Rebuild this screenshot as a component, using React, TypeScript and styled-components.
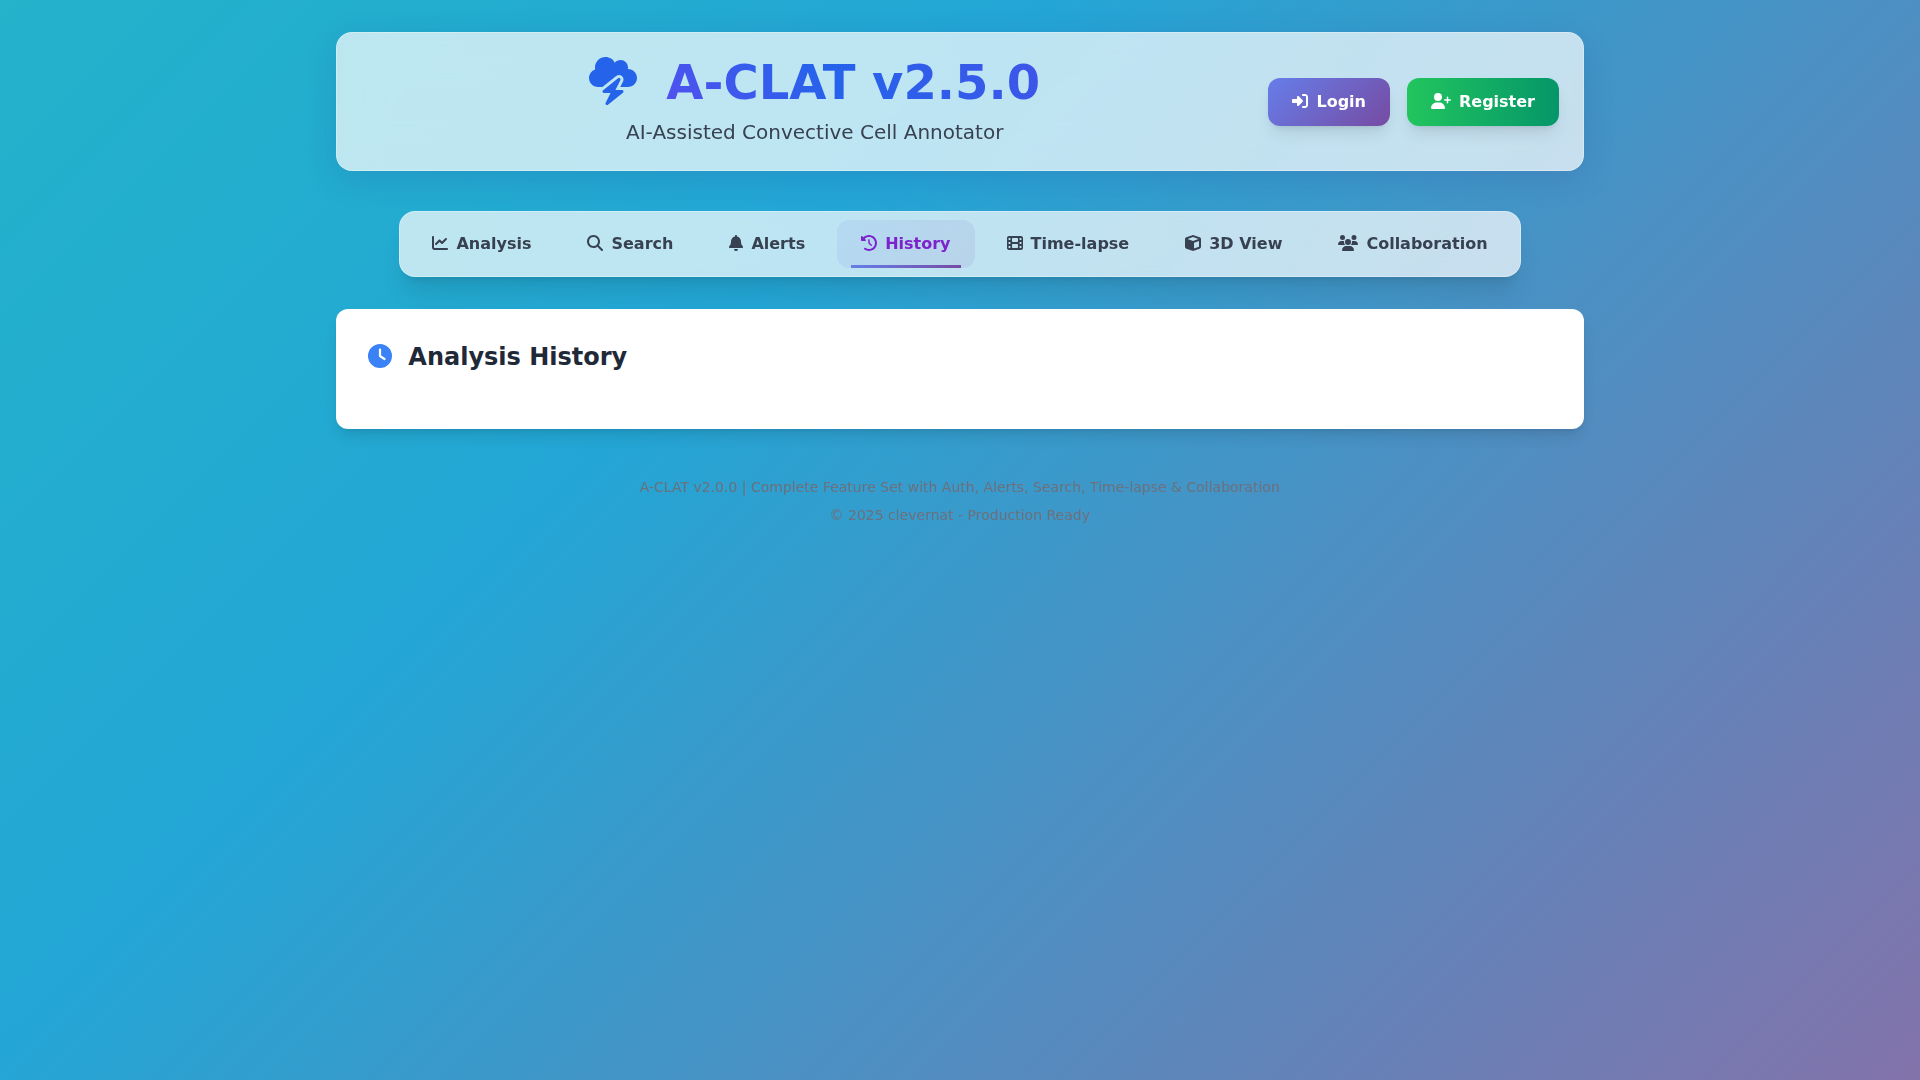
import React from 'react';
import styled, { createGlobalStyle, css } from 'styled-components';
import {
  FaBell,
  FaChartLine,
  FaClock,
  FaClockRotateLeft,
  FaCloudBolt,
  FaCube,
  FaFilm,
  FaMagnifyingGlass,
  FaRightToBracket,
  FaUserPlus,
  FaUsers,
} from 'react-icons/fa6';

const GlobalStyle = createGlobalStyle`
  *, *::before, *::after { box-sizing: border-box; }
  body {
    margin: 0;
    min-height: 100vh;
    font-family: 'DejaVu Sans', sans-serif;
    font-size: 16px;
    line-height: 24px;
    background: linear-gradient(-45deg, #ee7752, #e73c7e, #23a6d5, #23d5ab);
    background-size: 7680px 4320px;
    background-position: -1330px -1620px;
    background-attachment: fixed;
  }
  h1, h2, p { margin: 0; }
  svg { flex: none; margin-bottom: 2px; }
  svg[viewBox='0 0 640 512'] { width: 1.25em; }
  svg[viewBox='0 0 448 512'] { width: 0.875em; }
`;

const glass = css`
  background: rgba(255, 255, 255, 0.7);
  backdrop-filter: blur(20px);
  border: 1px solid rgba(255, 255, 255, 0.3);
  border-radius: 16px;
`;

const Page = styled.div`
  max-width: 1280px;
  margin: 0 auto;
  padding: 32px 16px;
`;

const Header = styled.header`
  ${glass}
  display: flex;
  align-items: center;
  height: 139px;
  margin-bottom: 40px;
  padding: 24px;
  box-shadow: 0 8px 32px rgba(31, 38, 135, 0.15);
`;

const Brand = styled.div`
  flex: 1;
  text-align: center;
`;

const Title = styled.h1`
  display: flex;
  justify-content: center;
  align-items: center;
  height: 49px;
  margin-bottom: 12px;
  font-size: 48px;
  line-height: 48px;
  font-weight: 700;
  svg { color: #2563eb; margin-right: 29px; }
`;

const TitleText = styled.span`
  background: linear-gradient(45deg, #5350ee, #2563eb 45%, #3f54e8);
  background-clip: text;
  -webkit-background-clip: text;
  color: transparent;
`;

const Tagline = styled.p`
  font-size: 20px;
  line-height: 28px;
  color: #374151;
`;

const Actions = styled.div`
  display: flex;
  gap: 17px;
`;

const ActionButton = styled.button<{ $fill: string }>`
  display: flex;
  align-items: center;
  gap: 8px;
  height: 48px;
  padding: 0 24px;
  border: 0;
  border-radius: 12px;
  background: ${({ $fill }) => $fill};
  color: #fff;
  font: 600 16px/24px 'DejaVu Sans', sans-serif;
  box-shadow: 0 10px 15px -3px rgba(0, 0, 0, 0.1), 0 4px 6px -4px rgba(0, 0, 0, 0.1);
`;

const Nav = styled.nav`
  ${glass}
  display: flex;
  gap: 8px;
  width: fit-content;
  margin: 0 auto 32px;
  padding: 8px;
  box-shadow: 0 20px 25px -5px rgba(0, 0, 0, 0.1), 0 8px 10px -6px rgba(0, 0, 0, 0.1);
`;

const Tab = styled.button<{ $active: boolean }>`
  position: relative;
  display: flex;
  align-items: center;
  gap: 8px;
  height: 48px;
  padding: 0 24px;
  border: 0;
  border-radius: 12px;
  background: ${({ $active }) =>
    $active ? 'linear-gradient(135deg, rgba(102, 126, 234, 0.1), rgba(118, 75, 162, 0.1))' : 'transparent'};
  color: ${({ $active }) => ($active ? '#7e22ce' : '#374151')};
  font: 600 16px/24px 'DejaVu Sans', sans-serif;
  &::after {
    content: '';
    display: ${({ $active }) => ($active ? 'block' : 'none')};
    position: absolute;
    left: 10%;
    bottom: 0;
    width: 80%;
    height: 3px;
    background: linear-gradient(135deg, #667eea, #764ba2);
  }
`;

const Card = styled.section`
  height: 120px;
  padding: 32px;
  border-radius: 12px;
  background: #fff;
  box-shadow: 0 10px 15px -3px rgba(0, 0, 0, 0.1), 0 4px 6px -4px rgba(0, 0, 0, 0.1);
`;

const CardTitle = styled.h2`
  display: flex;
  align-items: center;
  gap: 16.35px;
  font-size: 24px;
  line-height: 32px;
  font-weight: 700;
  color: #1f2937;
  svg { color: #3b82f6; }
`;

const Footer = styled.footer`
  display: flex;
  flex-direction: column;
  gap: 8px;
  margin-top: 48px;
  text-align: center;
  font-size: 14px;
  line-height: 20px;
  color: #6b7280;
`;

const tabs = [
  { label: 'Analysis', icon: FaChartLine },
  { label: 'Search', icon: FaMagnifyingGlass },
  { label: 'Alerts', icon: FaBell },
  { label: 'History', icon: FaClockRotateLeft },
  { label: 'Time-lapse', icon: FaFilm },
  { label: '3D View', icon: FaCube },
  { label: 'Collaboration', icon: FaUsers },
];

export default function App() {
  return (
    <>
      <GlobalStyle />
      <Page>
        <Header>
          <Brand>
            <Title>
              <FaCloudBolt />
              <TitleText>A-CLAT v2.5.0</TitleText>
            </Title>
            <Tagline>AI-Assisted Convective Cell Annotator</Tagline>
          </Brand>
          <Actions>
            <ActionButton $fill="linear-gradient(135deg, #667eea, #764ba2)">
              <FaRightToBracket />
              Login
            </ActionButton>
            <ActionButton $fill="linear-gradient(to right, #22c55e, #059669)">
              <FaUserPlus />
              Register
            </ActionButton>
          </Actions>
        </Header>
        <Nav>
          {tabs.map(({ label, icon: Icon }) => (
            <Tab key={label} $active={label === 'History'}>
              <Icon />
              {label}
            </Tab>
          ))}
        </Nav>
        <Card>
          <CardTitle>
            <FaClock />
            Analysis History
          </CardTitle>
        </Card>
        <Footer>
          <p>A-CLAT v2.0.0 | Complete Feature Set with Auth, Alerts, Search, Time-lapse &amp; Collaboration</p>
          <p>© 2025 clevernat - Production Ready</p>
        </Footer>
      </Page>
    </>
  );
}
